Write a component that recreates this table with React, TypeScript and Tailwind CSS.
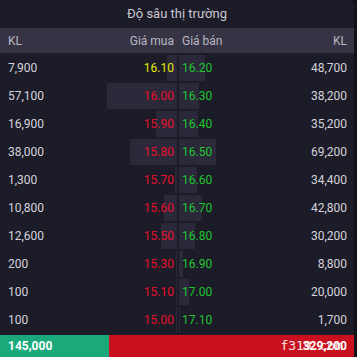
import React from 'react';

type Row = {
  buyVol: string;
  buyPrice: string;
  sellPrice: string;
  sellVol: string;
  buyBar: number;
  sellBar: number;
  buyColor: string;
};

const rows: Row[] = [
  { buyVol: '7,900', buyPrice: '16.10', sellPrice: '16.20', sellVol: '48,700', buyBar: 10, sellBar: 26, buyColor: 'text-[#e8e80c]' },
  { buyVol: '57,100', buyPrice: '16.00', sellPrice: '16.30', sellVol: '38,200', buyBar: 70, sellBar: 20, buyColor: 'text-[#e8112d]' },
  { buyVol: '16,900', buyPrice: '15.90', sellPrice: '16.40', sellVol: '35,200', buyBar: 21, sellBar: 19, buyColor: 'text-[#e8112d]' },
  { buyVol: '38,000', buyPrice: '15.80', sellPrice: '16.50', sellVol: '69,200', buyBar: 47, sellBar: 37, buyColor: 'text-[#e8112d]' },
  { buyVol: '1,300', buyPrice: '15.70', sellPrice: '16.60', sellVol: '34,400', buyBar: 2, sellBar: 18, buyColor: 'text-[#e8112d]' },
  { buyVol: '10,800', buyPrice: '15.60', sellPrice: '16.70', sellVol: '42,800', buyBar: 13, sellBar: 23, buyColor: 'text-[#e8112d]' },
  { buyVol: '12,600', buyPrice: '15.50', sellPrice: '16.80', sellVol: '30,200', buyBar: 16, sellBar: 16, buyColor: 'text-[#e8112d]' },
  { buyVol: '200', buyPrice: '15.30', sellPrice: '16.90', sellVol: '8,800', buyBar: 1, sellBar: 4, buyColor: 'text-[#e8112d]' },
  { buyVol: '100', buyPrice: '15.10', sellPrice: '17.00', sellVol: '20,000', buyBar: 1, sellBar: 10, buyColor: 'text-[#e8112d]' },
  { buyVol: '100', buyPrice: '15.00', sellPrice: '17.10', sellVol: '1,700', buyBar: 1, sellBar: 1, buyColor: 'text-[#e8112d]' },
];

export default function App() {
  return (
    <div className="w-[357px] h-[357px] bg-[#121118] flex font-['Roboto',sans-serif] text-[12px] overflow-hidden">
      <div className="w-[354px] h-full bg-[#1c1b28] rounded-tr-[5px] flex flex-col">
        <div className="h-[28px] flex items-center justify-center text-[13px] text-[#c9c8d0]">
          Độ sâu thị trường
        </div>
        <div className="h-[25px] bg-[#363444] flex items-center text-[#b8b7c2]">
          <div className="w-[107px] pl-[8px]">KL</div>
          <div className="w-[67px] text-right">Giá mua</div>
          <div className="w-[8px]" />
          <div className="flex-1">Giá bán</div>
          <div className="pr-[7px]">KL</div>
        </div>
        <div className="flex flex-col">
          {rows.map((r, i) => (
            <div key={i} className="h-[28px] pt-[2px] flex items-stretch">
              <div className="w-[107px] pl-[8px] flex items-center text-[#d4d3dc]">{r.buyVol}</div>
              <div className="w-[70px] relative flex items-center justify-end pr-[3px]">
                <div className="absolute right-0 top-0 bottom-0 bg-[#2a2839]" style={{ width: r.buyBar }} />
                <span className={`relative ${r.buyColor}`}>{r.buyPrice}</span>
              </div>
              <div className="w-[2px]" />
              <div className="flex-1 relative flex items-center pl-[3px]">
                <div className="absolute left-0 top-0 bottom-0 bg-[#2a2839]" style={{ width: r.sellBar }} />
                <span className="relative text-[#1ec52e]">{r.sellPrice}</span>
              </div>
              <div className="pr-[7px] flex items-center text-[#d4d3dc]">{r.sellVol}</div>
            </div>
          ))}
        </div>
        <div className="mt-[2px] h-[22px] flex font-bold text-white">
          <div className="w-[109px] bg-[#1aa97b] flex items-center pl-[8px]">145,000</div>
          <div className="flex-1 bg-[#c8101e] flex items-center justify-end pr-[7px] relative">
            <span>329,200</span>
            <span className="absolute right-[11px] font-['DejaVu_Sans_Mono',monospace] font-normal text-[13px] text-white/90">f319.com</span>
          </div>
        </div>
      </div>
    </div>
  );
}
